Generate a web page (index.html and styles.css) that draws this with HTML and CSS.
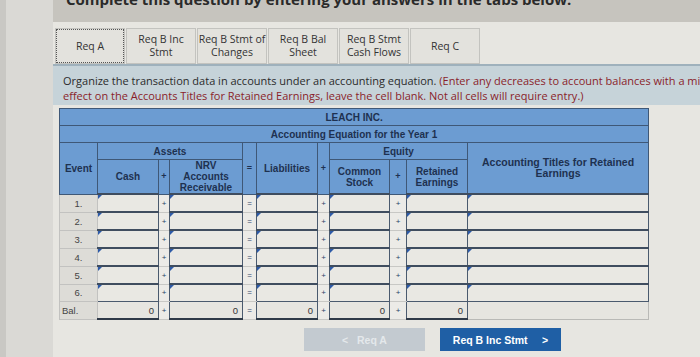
FILE: index.html
```html
<!DOCTYPE html>
<html lang="en">
<head>
    <meta charset="UTF-8">
    <title>Accounting Equation</title>
    <link rel="stylesheet" href="styles.css">
</head>
<body>

<div class="side"></div>

<div class="main">
    <div class="topbar">
        <h3>Complete this question by entering your answers in the tabs below.</h3>
    </div>

    <div class="tabs">
        <div class="tab active">Req A</div>
        <div class="tab">Req B Inc<br>Stmt</div>
        <div class="tab">Req B Stmt of<br>Changes</div>
        <div class="tab">Req B Bal<br>Sheet</div>
        <div class="tab">Req B Stmt<br>Cash Flows</div>
        <div class="tab">Req C</div>
    </div>

    <div class="instructions">
        <p>Organize the transaction data in accounts under an accounting equation. <span class="note">(Enter any decreases to account balances with a minus sign. If there is no<br>effect on the Accounts Titles for Retained Earnings, leave the cell blank. Not all cells will require entry.)</span></p>
    </div>

    <table class="equation">
        <colgroup>
            <col style="width:38px"><col style="width:61px"><col style="width:11px">
            <col style="width:73px"><col style="width:14px"><col style="width:61px">
            <col style="width:12px"><col style="width:60px"><col style="width:17px">
            <col style="width:61px"><col style="width:181px">
        </colgroup>
        <thead>
            <tr class="title"><th colspan="11">LEACH INC.</th></tr>
            <tr class="title"><th colspan="11">Accounting Equation for the Year 1</th></tr>
            <tr class="group">
                <th rowspan="2">Event</th>
                <th colspan="3">Assets</th>
                <th rowspan="2" class="sign">=</th>
                <th rowspan="2">Liabilities</th>
                <th rowspan="2" class="sign">+</th>
                <th colspan="3">Equity</th>
                <th rowspan="2" class="titles">Accounting Titles for Retained<br>Earnings</th>
            </tr>
            <tr class="cols">
                <th>Cash</th>
                <th class="sign">+</th>
                <th>NRV<br>Accounts<br>Receivable</th>
                <th>Common<br>Stock</th>
                <th class="sign">+</th>
                <th>Retained<br>Earnings</th>
            </tr>
        </thead>
        <tbody id="rows"></tbody>
    </table>

    <div class="nav">
        <button class="btn prev" disabled>&lt;&nbsp;&nbsp;&nbsp;Req A</button>
        <button class="btn next">Req B Inc Stmt&nbsp;&nbsp;&nbsp;&nbsp;&nbsp;&gt;</button>
    </div>
</div>

<script>
    // six transaction rows plus the balance row
    const body = document.getElementById('rows');
    const ops = ['+', '=', '+', '+'];

    for (let i = 1; i <= 6; i++) {
        const tr = document.createElement('tr');
        tr.className = 'entry';
        let html = `<td class="event">${i}.</td>`;
        for (let c = 0; c < 5; c++) {
            html += '<td class="cell"></td>';
            if (c < 4) html += `<td class="op">${ops[c]}</td>`;
        }
        html += '<td class="cell wide"></td>';
        tr.innerHTML = html;
        body.appendChild(tr);
    }

    const bal = document.createElement('tr');
    bal.className = 'balance';
    let html = '<td class="event">Bal.</td>';
    for (let c = 0; c < 5; c++) {
        html += '<td class="total">0</td>';
        if (c < 4) html += `<td class="op">${ops[c]}</td>`;
    }
    html += '<td class="blank"></td>';
    bal.innerHTML = html;
    body.appendChild(bal);
</script>

</body>
</html>
```

FILE: styles.css
```css
body {
    margin: 0;
    display: flex;
    height: 357px;
    overflow: hidden;
    background-color: #e7e6e1;
    font-family: "Liberation Sans", Arial, sans-serif;
    color: #333;
}
.side {
    width: 53px;
    flex-shrink: 0;
    background-color: #dad9d5;
    border-left: 6px solid #c9c8c4;
    box-sizing: border-box;
}
.main {
    flex: 1;
    min-width: 0;
}
.topbar {
    height: 22px;
    background-color: #c6c4be;
    overflow: hidden;
}
.topbar h3 {
    margin: -10px 0 0 0;
    padding-left: 13px;
    font-family: "Open Sans", sans-serif;
    font-size: 15px;
    line-height: 18px;
    color: #2a2a2a;
    white-space: nowrap;
}
.tabs {
    display: flex;
    gap: 1px;
    margin-top: 6px;
    padding-left: 2px;
}
.tab {
    width: 70px;
    height: 36px;
    display: flex;
    align-items: center;
    justify-content: center;
    text-align: center;
    font-family: "Open Sans", sans-serif;
    font-size: 10.5px;
    line-height: 13px;
    color: #333;
    background-color: #e3e2dd;
    border: 1px solid #c3c3bf;
    box-sizing: border-box;
}
.tab.active {
    outline: 1px dotted #555;
    outline-offset: -2px;
}
.instructions {
    height: 41px;
    background-color: #c6d3d9;
    border-top: 2px solid #9fb1bc;
    box-sizing: border-box;
    padding: 7px 0 0 10px;
    overflow: hidden;
}
.instructions p {
    margin: 0;
    white-space: nowrap;
    font-family: "Open Sans", sans-serif;
    font-size: 11px;
    line-height: 15px;
    color: #2b2b2b;
}
.note {
    color: #8a1e2a;
}
.equation {
    margin: 3px 0 0 6px;
    border-collapse: collapse;
    table-layout: fixed;
    width: 589px;
    font-size: 10px;
}
.equation th {
    background-color: #6c9cd2;
    color: #1e3150;
    font-weight: bold;
    border: 1px solid #3f5877;
    padding: 0;
    line-height: 11px;
    text-align: center;
}
.equation th.sign {
    font-size: 9px;
}
.equation .title th {
    height: 16px;
}
.equation .group th {
    height: 16px;
}
.equation .cols th {
    height: 32px;
}
.equation th.titles {
    font-size: 10.5px;
    vertical-align: middle;
}
.equation td {
    padding: 0;
    height: 16px;
    font-size: 9.5px;
}
.event {
    background-color: #dddcd7;
    text-align: center;
    color: #444;
    border: 1px solid #c2c2c0;
}
.balance .event {
    text-align: left;
    padding-left: 2px !important;
}
.op {
    background-color: #ecebe7;
    text-align: center;
    color: #2d4468;
    font-size: 8px !important;
    border-top: 1px solid #c8c8c5;
    border-bottom: 1px solid #c8c8c5;
}
.cell {
    position: relative;
    background-color: #e9e8e3;
    border-top: 2px solid #3f4d5f;
    border-left: 1px solid #4a5a6e;
    border-right: 1px solid #4a5a6e;
    border-bottom: 1px solid #4a5a6e;
}
/* little blue flag marking an editable cell */
.cell::before {
    content: "";
    position: absolute;
    top: 0;
    left: 0;
    border-top: 4px solid #2d5aa8;
    border-right: 4px solid transparent;
}
.total {
    background-color: #e6e5e0;
    text-align: right;
    padding-right: 4px !important;
    color: #333;
    border-left: 1px solid #4a5a6e;
    border-right: 1px solid #4a5a6e;
    border-bottom: 2px solid #2f3a48;
}
.blank {
    background-color: #e6e5e0;
    border: 1px solid #b9b9b6;
}
.nav {
    display: flex;
    gap: 15px;
    margin: 8px 0 0 251px;
}
.btn {
    width: 121px;
    height: 23px;
    border: none;
    font-family: "Liberation Sans", Arial, sans-serif;
    font-size: 10.5px;
    font-weight: bold;
    color: #fff;
}
.btn.prev {
    background-color: #c3cad0;
    color: #e4e8eb;
}
.btn.next {
    background-color: #1f5fa5;
}
```
